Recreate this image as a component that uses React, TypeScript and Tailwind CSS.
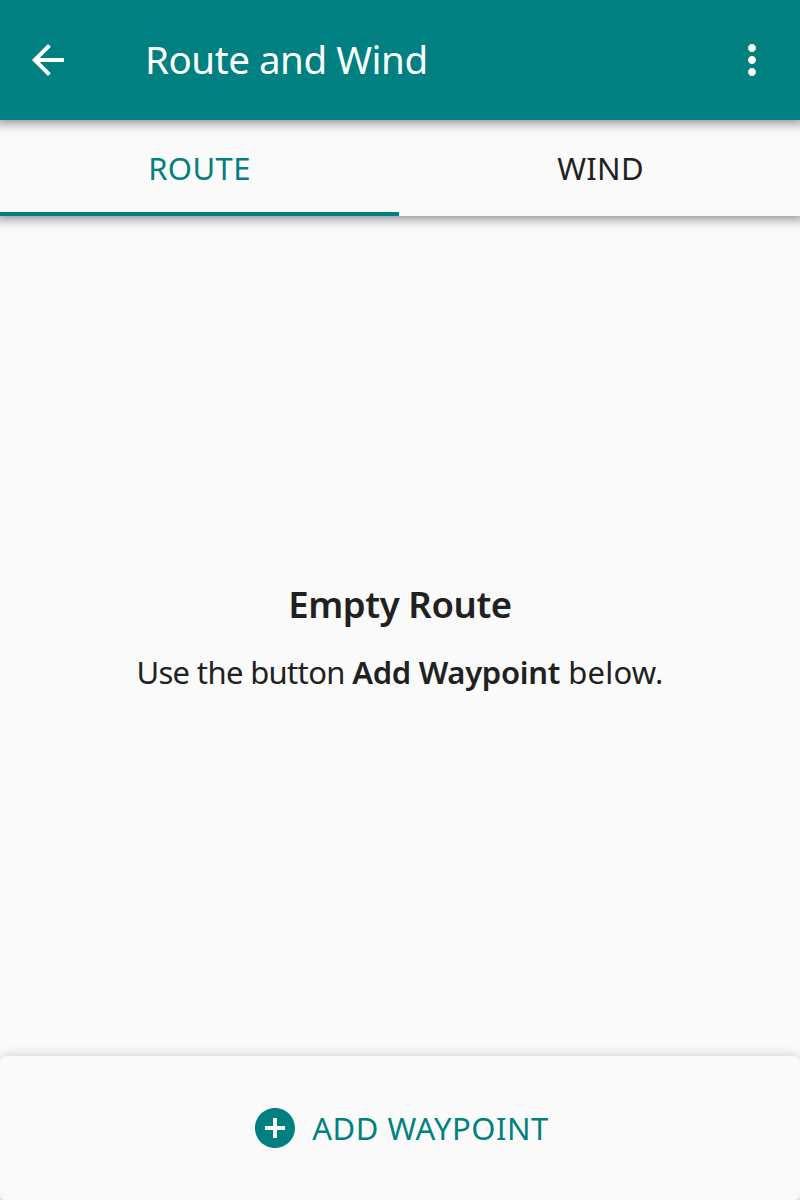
import React from 'react';

function BackIcon() {
  return (
    <svg className="h-12 w-12" viewBox="0 0 24 24" fill="currentColor" aria-hidden="true">
      <path d="M20 11H7.83l5.59-5.59L12 4l-8 8 8 8 1.41-1.41L7.83 13H20v-2z" />
    </svg>
  );
}

function MoreIcon() {
  return (
    <svg className="h-12 w-12" viewBox="0 0 24 24" fill="currentColor" aria-hidden="true">
      <path d="M12 8c1.1 0 2-.9 2-2s-.9-2-2-2-2 .9-2 2 .9 2 2 2zm0 2c-1.1 0-2 .9-2 2s.9 2 2 2 2-.9 2-2-.9-2-2-2zm0 6c-1.1 0-2 .9-2 2s.9 2 2 2 2-.9 2-2-.9-2-2-2z" />
    </svg>
  );
}

function AddCircleIcon() {
  return (
    <svg className="h-12 w-12 shrink-0" viewBox="0 0 24 24" fill="currentColor" aria-hidden="true">
      <path d="M12 2C6.48 2 2 6.48 2 12s4.48 10 10 10 10-4.48 10-10S17.52 2 12 2zm5 11h-4v4h-2v-4H7v-2h4V7h2v4h4v2z" />
    </svg>
  );
}

export default function App() {
  return (
    <div className="flex h-[1200px] w-[800px] flex-col overflow-hidden bg-[#fafafa] font-['Noto_Sans',sans-serif] text-[#212121]">
      <header className="relative z-20 flex h-[120px] shrink-0 items-center bg-[#008080] text-white shadow-[0_-4px_12px_6px_rgba(0,0,0,0.5)]">
        <button className="ml-6" aria-label="Back"><BackIcon /></button>
        <h1 className="ml-[73px] grow pb-[2px] whitespace-nowrap text-[38.5px] leading-[60px] tracking-[-0.45px]">Route and Wind</h1>
        <button className="mr-6" aria-label="More"><MoreIcon /></button>
      </header>
      <nav className="relative z-10 flex h-24 shrink-0 bg-[#fafafa] text-[31px] leading-[96px] shadow-[0_-4px_12px_6px_rgba(0,0,0,0.5)]">
        <button className="w-[399px] border-b-4 border-[#008080] tracking-[0.4px] text-[#008080]"><span className="block h-[92px]">ROUTE</span></button>
        <button className="ml-[2px] w-[399px] tracking-[0.3px]">WIND</button>
      </nav>
      <main className="flex grow flex-col items-center pt-[364px]">
        <h2 className="whitespace-nowrap text-[36.5px] leading-[48px] font-semibold tracking-[-0.4px]">Empty Route</h2>
        <p className="mt-[22px] whitespace-nowrap text-[31px] leading-[44px] tracking-[-0.65px]">Use the button <b className="font-semibold tracking-[-0.3px]">Add Waypoint</b><span className="tracking-[0.2px]"> below.</span></p>
      </main>
      <footer className="flex h-36 shrink-0 items-center justify-center gap-[13px] rounded-[6px] bg-[#fafafa] text-[#008080] shadow-[0_2px_14px_rgba(0,0,0,0.25)]">
        <AddCircleIcon />
        <span className="whitespace-nowrap text-[31px] tracking-[0.5px]">ADD WAYPOINT</span>
      </footer>
    </div>
  );
}
